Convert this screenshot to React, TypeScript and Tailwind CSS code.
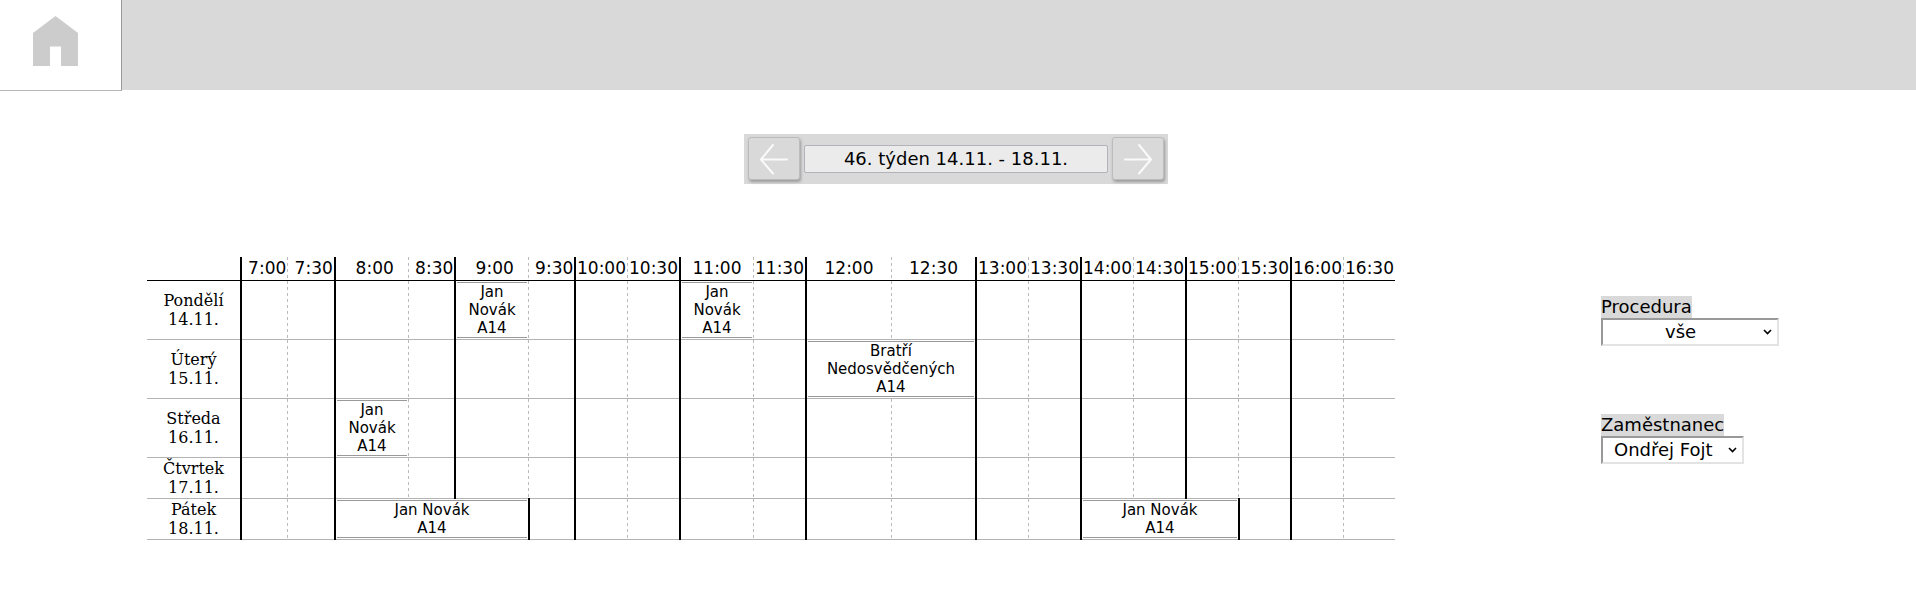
import React from "react";

const COLS =
  "grid-cols-[93px_47px_47px_74px_46px_74px_46px_53px_52px_74px_52px_86px_84px_53px_52px_53px_52px_53px_52px_53px_52px]";

const TIMES = [
  "\u00a07:00", "\u00a07:30", "\u00a08:00", "\u00a08:30", "\u00a09:00", "\u00a09:30",
  "10:00", "10:30", "11:00", "11:30", "12:00", "12:30", "13:00", "13:30",
  "14:00", "14:30", "15:00", "15:30", "16:00", "16:30",
];

type Booking = { start: number; span: number; lines: string[] };
type Day = { name: string; date: string; tall: boolean; bookings: Booking[] };

const DAYS: Day[] = [
  {
    name: "Pondělí", date: "14.11.", tall: true,
    bookings: [
      { start: 4, span: 1, lines: ["Jan", "Novák", "A14"] },
      { start: 8, span: 1, lines: ["Jan", "Novák", "A14"] },
    ],
  },
  {
    name: "Úterý", date: "15.11.", tall: true,
    bookings: [{ start: 10, span: 2, lines: ["Bratří", "Nedosvědčených", "A14"] }],
  },
  {
    name: "Středa", date: "16.11.", tall: true,
    bookings: [{ start: 2, span: 1, lines: ["Jan", "Novák", "A14"] }],
  },
  { name: "Čtvrtek", date: "17.11.", tall: false, bookings: [] },
  {
    name: "Pátek", date: "18.11.", tall: false,
    bookings: [
      { start: 2, span: 3, lines: ["Jan Novák", "A14"] },
      { start: 14, span: 3, lines: ["Jan Novák", "A14"] },
    ],
  },
];

const SPANS: Record<number, string> = { 1: "", 2: "col-span-2", 3: "col-span-3" };
const SOLID = "relative -mb-px border-l-2 border-black";
const DASHED =
  "bg-[repeating-linear-gradient(to_bottom,#bbb_0px,#bbb_3px,transparent_3px,transparent_6px)] bg-[length:1px_100%] bg-no-repeat pl-px";

function DayRow({ day }: { day: Day }) {
  const cells: React.ReactNode[] = [];
  let afterLong = false;
  for (let i = 0; i < TIMES.length; ) {
    const booking = day.bookings.find((b) => b.start === i);
    const solid = i % 2 === 0 || afterLong;
    const line = afterLong ? SOLID + " -mt-px" : solid ? SOLID : DASHED;
    afterLong = false;
    if (booking) {
      cells.push(
        <div key={i} className={`${line} ${SPANS[booking.span]} px-px pt-px pb-[2px]`}>
          <div className="flex h-full flex-col items-center border-y border-[#999] text-[15px] leading-[18px]">
            {booking.lines.map((l) => (
              <span key={l}>{l}</span>
            ))}
          </div>
        </div>
      );
      afterLong = booking.span === 3;
      i += booking.span;
    } else {
      cells.push(<div key={i} className={line} />);
      i += 1;
    }
  }
  return (
    <div className={`grid ${COLS} border-b border-[#b3b3b3] ${day.tall ? "h-[59px]" : "h-[41px]"}`}>
      <div className="flex flex-col items-center justify-center font-['DejaVu_Serif',serif] text-base leading-[19px]">
        <span>{day.name}</span>
        <span>{day.date}</span>
      </div>
      {cells}
    </div>
  );
}

function ArrowButton({ right = false }: { right?: boolean }) {
  return (
    <button
      aria-label={right ? "Další týden" : "Předchozí týden"}
      className="flex h-[43px] w-[52px] items-center justify-center rounded-[3px] border border-[#bcbcbc] bg-[#d9d9d9] shadow-[1px_2px_3px_#9a9a9a]"
    >
      <svg width="30" height="32" viewBox="0 0 30 32" fill="none" stroke="#fafafa" strokeWidth="2" strokeLinecap="round" strokeLinejoin="round" className={right ? "-scale-x-100" : ""}>
        <path d="M14 2L2 16.500L14 30.500M2 16.500H28" />
      </svg>
    </button>
  );
}

function Filter({ label, value, box, text }: { label: string; value: string; box: string; text: string }) {
  return (
    <div className="flex flex-col items-start text-[18px]">
      <span className="h-[22px] bg-[#d9d9d9] leading-[22px]">{label}</span>
      <div className={`flex h-7 items-center border-2 border-t-[#999] border-l-[#999] border-r-[#e3e3e3] border-b-[#e3e3e3] ${box}`}>
        <span className={`leading-[22px] ${text}`}>{value}</span>
        <svg width="9" height="6" viewBox="0 0 9 6" fill="none" stroke="black" strokeWidth="1.600" className="mr-[5px] ml-auto">
          <path d="M1 1L4.500 4.500L8 1" />
        </svg>
      </div>
    </div>
  );
}

export default function App() {
  return (
    <div className="h-[599px] w-[1916px] overflow-hidden bg-white font-['DejaVu_Sans',sans-serif] text-black">
      <header className="flex h-[91px] items-start">
        <div className="h-[91px] w-[122px] border-r border-b border-r-[#999] border-b-[#b8b8b8] pt-4 pl-[33px]">
          <svg width="45" height="50" viewBox="0 0 45 50" fill="#ccc">
            <path d="M0 17L22.500 0L45 17V50H28V30.500H17V50H0Z" />
          </svg>
        </div>
        <div className="h-[90px] flex-1 bg-[#d9d9d9]" />
      </header>

      <nav className="mt-[43px] ml-[744px] flex h-[50px] w-[424px] items-start bg-[#d9d9d9] pt-[3px] pl-1">
        <ArrowButton />
        <div className="mt-2 mr-1 ml-1 flex h-7 w-[304px] items-center justify-center rounded-[2px] border border-[#b2b2b8] bg-[#ebebeb] text-[18px] leading-[26px]">
          46. týden 14.11. - 18.11.
        </div>
        <ArrowButton right />
      </nav>

      <main className="mt-[73px] ml-[147px] flex items-start">
        <div className="w-[1248px]">
          <div className={`grid h-6 ${COLS} border-b border-black`}>
            <div />
            {TIMES.map((t, i) => (
              <div key={t} className={`flex justify-center text-[17px] leading-[22px] whitespace-pre ${i % 2 ? DASHED : SOLID}`}>
                {t}
              </div>
            ))}
          </div>
          {DAYS.map((d) => (
            <DayRow key={d.name} day={d} />
          ))}
        </div>
        <aside className="mt-[39px] ml-[206px] flex flex-col gap-[68px]">
          <Filter label="Procedura" value="vše" box="w-[178px]" text="ml-[62px]" />
          <Filter label="Zaměstnanec" value="Ondřej Fojt" box="w-[143px]" text="ml-[11px]" />
        </aside>
      </main>
    </div>
  );
}
